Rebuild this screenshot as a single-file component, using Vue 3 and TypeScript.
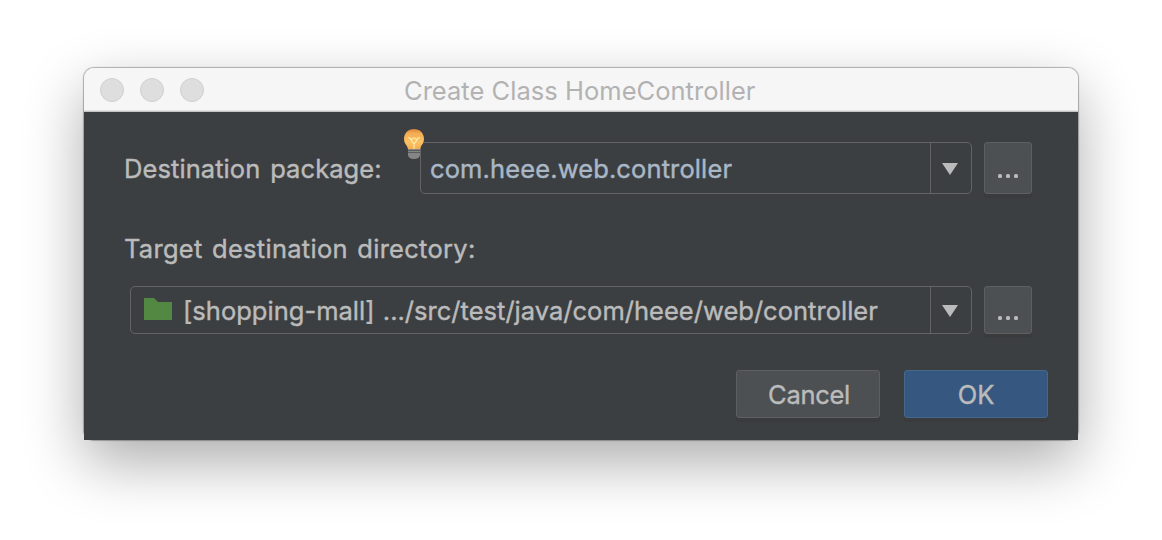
<script setup lang="ts">
import { ref } from 'vue'

const title = 'Create Class HomeController'
const packageName = ref<string>('com.heee.web.controller')
const directory = ref<string>('[shopping-mall] .../src/test/java/com/heee/web/controller')
const lights: string[] = ['close', 'minimize', 'zoom']
</script>

<template>
  <main class="desktop">
    <section class="window">
      <header class="titlebar">
        <div class="lights">
          <span v-for="light in lights" :key="light" class="light"></span>
        </div>
        <h1 class="title">{{ title }}</h1>
      </header>
      <div class="body">
        <div class="row package-row">
          <label class="label t-dest">Destination package:</label>
          <div class="combo package-combo">
            <svg class="bulb" width="20" height="30" viewBox="0 0 20 30">
              <defs>
                <linearGradient id="glass" x1="0" y1="0" x2="0" y2="1">
                  <stop offset="0" stop-color="#dc8136" />
                  <stop offset=".2" stop-color="#f3ab52" />
                  <stop offset=".65" stop-color="#fbc164" />
                  <stop offset="1" stop-color="#f3ad50" />
                </linearGradient>
              </defs>
              <path d="M10 0C4.300 0 0 4.200 0 9.800C0 13.700 1.700 15.500 3 17.300L4 20H16L17 17.300C18.300 15.500 20 13.700 20 9.800C20 4.200 15.700 0 10 0Z" fill="url(#glass)" />
              <path d="M4.200 8.300L6.500 9.700L8.300 13L10 14.800L11.700 13L13.500 9.700L15.800 8.300M10 19.800V14.800M8.300 13L7.600 11.200Q7.900 9 10 9T12.400 11.200L11.700 13" fill="none" stroke="#ffeba6" stroke-width="1.200" />
              <path d="M4 20H16V21H4ZM4 22H16V23H4ZM4 24H16V26Q15.500 30 10 30T4 26Z" fill="#858585" />
              <path d="M4 21H16V22H4ZM4 23H16V24H4Z" fill="#5b5b5b" />
            </svg>
            <div class="value code"><span class="t-package">{{ packageName }}</span></div>
            <div class="arrow">
              <svg width="16" height="12" viewBox="0 0 16 12"><path d="M0 0H16L8 12Z" fill="#bbb" /></svg>
            </div>
          </div>
          <button class="button browse"><i></i><i></i><i></i></button>
        </div>
        <label class="label target">Target destination directory:</label>
        <div class="row directory-row">
          <div class="combo directory-combo">
            <div class="value">
              <svg class="folder" width="28" height="22" viewBox="0 0 28 22"><path d="M0 0H10L14 4H28V22H0Z" fill="#538843" /></svg>
              <span class="t-directory">{{ directory }}</span>
            </div>
            <div class="arrow">
              <svg width="16" height="12" viewBox="0 0 16 12"><path d="M0 0H16L8 12Z" fill="#bbb" /></svg>
            </div>
          </div>
          <button class="button browse"><i></i><i></i><i></i></button>
        </div>
        <footer class="actions">
          <button class="button action cancel">Cancel</button>
          <button class="button action primary">OK</button>
        </footer>
      </div>
    </section>
  </main>
</template>

<style>
body {
  margin: 0;
  background: #fff;
}
</style>

<style scoped>
* {
  box-sizing: border-box;
}
.desktop {
  width: 1162px;
  height: 540px;
  padding: 68px 84px 100px;
  overflow: hidden;
  background: #fff;
  font: 25.5px/32px Inter, "Liberation Sans", sans-serif;
  color: #bbb;
}
.window {
  width: 994px;
  height: 372px;
  border-radius: 10px;
  box-shadow: 0 0 1px 1px rgba(0, 0, 0, .28), 0 22px 60px rgba(0, 0, 0, .33);
}
.titlebar {
  display: grid;
  grid-template-columns: 320px 1fr;
  height: 44px;
  border-radius: 10px 10px 0 0;
  border-bottom: 1px solid #c6c6c6;
  box-shadow: inset 0 -1px 0 #e2e2e2;
  background: #f6f6f6;
}
.lights {
  display: flex;
  gap: 16px;
  padding: 10px 16px;
}
.light {
  width: 24px;
  height: 24px;
  border: 1px solid #d0d0d0;
  border-radius: 50%;
  background: #dedede;
}
.title {
  margin: 0;
  padding-top: 7px;
  font: inherit;
  letter-spacing: .03px;
  color: #b2b2b2;
  white-space: nowrap;
}
.body {
  height: 328px;
  padding: 30px 30px 0 40px;
  background: #3c3f41;
  -webkit-text-stroke: .4px currentColor;
}
.row {
  display: flex;
  gap: 12px;
}
.package-row {
  height: 52px;
}
.label {
  display: block;
  white-space: nowrap;
}
.package-row .label {
  width: 284px;
  padding-top: 11px;
  letter-spacing: .08px;
  word-spacing: 2.500px;
}
.combo {
  position: relative;
  display: flex;
  border: 1px solid #646464;
  border-radius: 5px;
}
.package-combo {
  width: 552px;
}
.directory-combo {
  width: 842px;
}
.value {
  display: flex;
  align-items: center;
  flex: 1;
  min-width: 0;
  padding-left: 9px;
  padding-top: 2px;
  white-space: nowrap;
}
.directory-combo .value {
  padding-left: 13px;
  gap: 11px;
}
.folder {
  margin-top: -4px;
}
.code {
  color: #a9b7c6;
}
.t-package {
  letter-spacing: .12px;
}
.t-directory {
  letter-spacing: .02px;
  word-spacing: 1px;
}
.arrow {
  display: flex;
  align-items: center;
  justify-content: center;
  width: 41px;
  padding-right: 2px;
  padding-top: 2px;
  border-left: 1px solid #646464;
}
.bulb {
  position: absolute;
  left: -17px;
  top: -14px;
}
.button {
  display: flex;
  align-items: center;
  justify-content: center;
  padding: 0;
  border: 1px solid #5e6060;
  border-radius: 3px;
  background: #4c5052;
  box-shadow: 0 4px 0 #393b3c;
  font: inherit;
  color: #bbb;
  -webkit-text-stroke: inherit;
}
.browse {
  gap: 4px;
  width: 48px;
  padding-top: 16px;
}
.browse i {
  width: 4px;
  height: 4px;
  border-radius: 1.500px;
  background: #bbb;
}
.target {
  margin-top: 39px;
  letter-spacing: .28px;
  word-spacing: 2px;
}
.directory-row {
  height: 48px;
  margin: 21px 0 0 6px;
}
.actions {
  display: flex;
  justify-content: flex-end;
  gap: 24px;
  margin-top: 36px;
}
.action {
  width: 144px;
  height: 48px;
  padding-top: 2px;
}
.cancel {
  padding-left: 2px;
  letter-spacing: -.3px;
}
.primary {
  border-color: #43688c;
  background: #365880;
}
</style>
